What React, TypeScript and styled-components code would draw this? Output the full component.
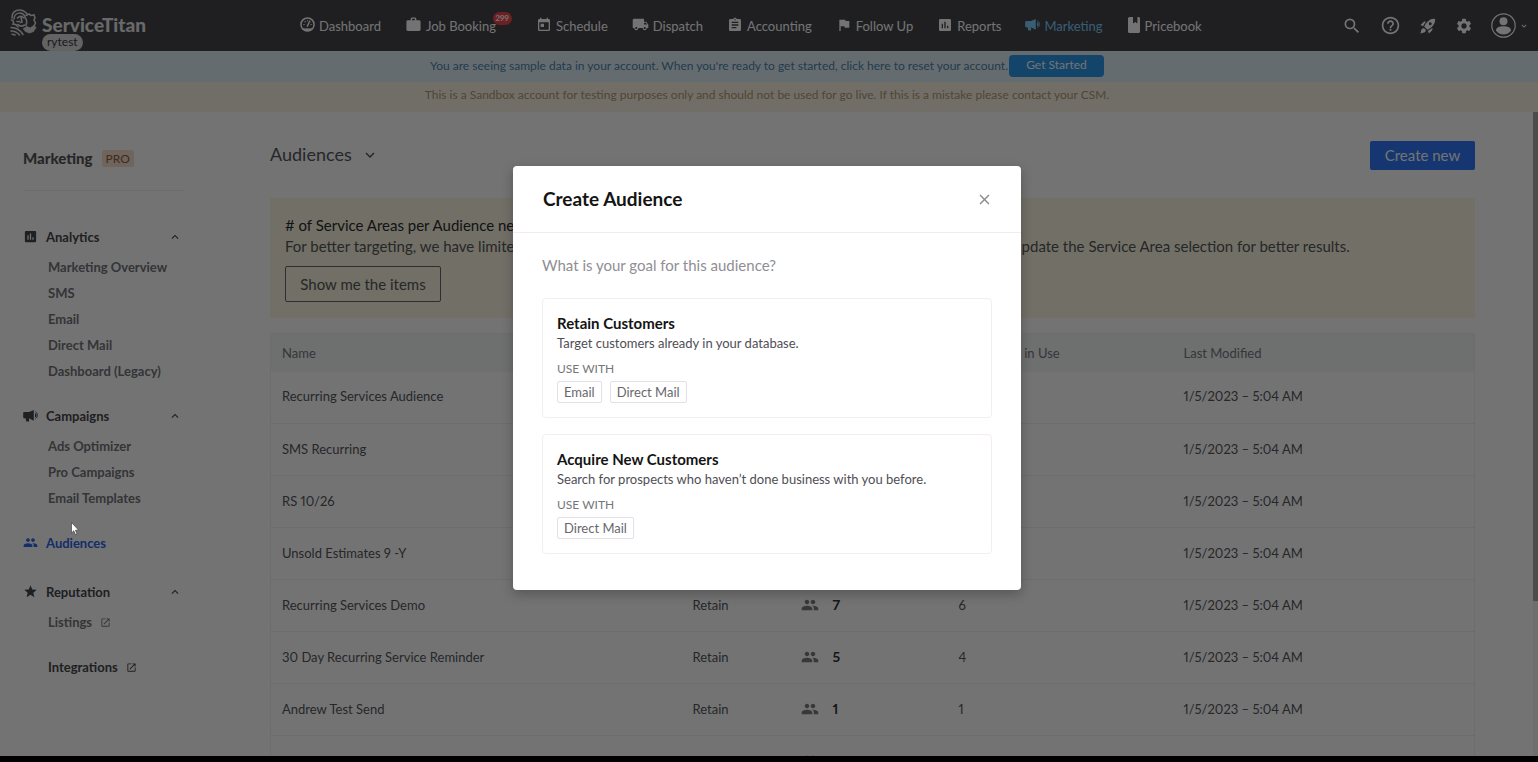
import React from "react";
import styled, { createGlobalStyle, css } from "styled-components";
import {
  MdWork,
  MdToday,
  MdLocalShipping,
  MdAssignment,
  MdFlag,
  MdAssessment,
  MdSearch,
  MdHelpOutline,
  MdSettings,
  MdPeople,
  MdStar,
  MdOpenInNew,
  MdExpandMore,
  MdExpandLess,
  MdClose,
  MdRocketLaunch,
} from "react-icons/md";

const Global = createGlobalStyle`
  *, *::before, *::after { box-sizing: border-box; }
  body {
    margin: 0;
    background: #000;
    color: #56575c;
    font-family: Lato, "Liberation Sans", sans-serif;
    font-size: 13px;
    font-variant-numeric: proportional-nums;
    overflow: hidden;
  }
  button { font-family: inherit; cursor: pointer; }
  a { color: inherit; text-decoration: none; }
  h1, h2, h3, p, ul { margin: 0; padding: 0; }
  ul { list-style: none; }
  svg { display: block; flex: none; }
`;

/* ---------- shell ---------- */

const Screen = styled.div`
  height: 100vh;
  display: flex;
  flex-direction: column;
  padding-bottom: 6px;
  background: #000;
`;

const Shell = styled.div`
  position: relative;
  flex: 1;
  min-height: 0;
  display: flex;
  flex-direction: column;
  background: #fff;
  overflow: hidden;
`;

const TopBar = styled.header`
  height: 51px;
  flex: none;
  display: flex;
  align-items: center;
  padding: 0 9px 0 10px;
  background: #45454a;
  color: #fff;
`;

const Brand = styled.a`
  position: relative;
  width: 290px;
  height: 51px;
  flex: none;
  display: flex;
  align-items: center;
  gap: 5px;
  padding-bottom: 2px;
  font-size: 19px;
  font-weight: 900;
  line-height: 24px;
  color: #e8e8ea;

  svg { margin-bottom: 4px; }
`;

const Tenant = styled.span`
  position: absolute;
  left: 32px;
  top: 34px;
  height: 17px;
  padding: 0 5px;
  border-radius: 9px;
  background: #dcdcde;
  color: #3a3a3e;
  font-size: 12px;
  font-weight: 400;
  line-height: 15px;
`;

const MainNav = styled.nav`
  display: flex;
  align-items: center;
  gap: 24px;
  flex: 1;
`;

const NavLink = styled.a<{ $active?: boolean; $badged?: boolean }>`
  position: relative;
  display: flex;
  align-items: center;
  gap: 4px;
  line-height: 20px;
  white-space: nowrap;
  color: ${(p) => (p.$active ? "#7fd0ff" : "#fff")};
  ${(p) =>
    p.$badged &&
    css`
      padding-right: 16px;
    `}

  svg { margin-bottom: 2px; }
`;

const Badge = styled.span`
  position: absolute;
  right: 0;
  top: -4px;
  height: 13px;
  padding: 0 3px;
  border-radius: 7px;
  background: #f0484f;
  font-size: 8px;
  font-weight: 700;
  line-height: 13px;
`;

const Tools = styled.div`
  display: flex;
  align-items: center;
  gap: 18px;
`;

const IconButton = styled.button`
  display: flex;
  align-items: center;
  gap: 3px;
  padding: 0;
  border: 0;
  background: none;
  color: inherit;
`;

const Banner = styled.div<{ $tone: "info" | "sandbox" }>`
  height: ${(p) => (p.$tone === "info" ? "31px" : "30px")};
  flex: none;
  display: flex;
  align-items: center;
  justify-content: center;
  gap: 1px;
  padding-right: 4px;
  padding-bottom: ${(p) => (p.$tone === "info" ? "2px" : "4px")};
  font-size: 12px;
  line-height: 20px;
  background: ${(p) => (p.$tone === "info" ? "#e0eff8" : "#faf4e4")};
  color: ${(p) => (p.$tone === "info" ? "#4f84a8" : "#b39a74")};
`;

const StartButton = styled.button`
  height: 22px;
  width: 95px;
  margin-top: 1px;
  padding: 0 0 2px;
  border: 0;
  border-radius: 4px;
  background: #2b98ea;
  color: #fff;
  font-size: 12px;
  line-height: 18px;
`;

const Workspace = styled.div`
  flex: 1;
  min-height: 0;
  display: flex;
  overflow: hidden;
`;

const ScrollTrack = styled.div`
  width: 5px;
  flex: none;
  background: #f4f4f4;
`;

const ScrollThumb = styled.div`
  height: 76%;
  background: #a9a9ad;
`;

/* ---------- sidebar ---------- */

const Sidebar = styled.aside`
  width: 270px;
  flex: none;
  padding: 33px 86px 0 23px;
`;

const SidebarTitle = styled.div`
  display: flex;
  align-items: center;
  gap: 9px;
  height: 46px;
  margin-bottom: 29px;
  padding-bottom: 19px;
  border-bottom: 1px solid #eeeef0;
`;

const ProductName = styled.h1`
  font-size: 15px;
  font-weight: 900;
  line-height: 28px;
  color: #55565b;
`;

const ProTag = styled.span`
  padding: 0 4px;
  border-radius: 2px;
  background: #f5dfcd;
  color: #8f6242;
  font-size: 12px;
  line-height: 17px;
`;

const Group = styled.section`
  margin-bottom: 15px;
`;

const GroupHead = styled.button<{ $active?: boolean }>`
  width: 100%;
  height: 34px;
  display: flex;
  align-items: center;
  gap: 8px;
  padding: 0 2px 1px 0;
  border: 0;
  background: none;
  color: ${(p) => (p.$active ? "#2c66e8" : "#46474c")};
  font-size: 13px;
  font-weight: 700;
  text-align: left;
`;

const GroupLabel = styled.span`
  flex: 1;
`;

const SubLink = styled.a<{ $strong?: boolean }>`
  height: ${(p) => (p.$strong ? "34px" : "26px")};
  display: flex;
  align-items: center;
  gap: 8px;
  padding-left: 25px;
  font-weight: 700;
  white-space: nowrap;
  color: ${(p) => (p.$strong ? "#46474c" : "#74757b")};
`;

/* ---------- main ---------- */

const Main = styled.main`
  flex: 1;
  min-width: 0;
  padding: 29px 58px 0 0;
`;

const PageHead = styled.div`
  display: flex;
  align-items: center;
  justify-content: space-between;
  margin-bottom: 28px;
`;

const ViewPicker = styled.button`
  display: flex;
  align-items: center;
  gap: 9px;
  padding: 0 0 2px;
  border: 0;
  background: none;
  color: #56575c;
  font-size: 18px;
  line-height: 27px;
`;

const CreateButton = styled.button`
  height: 29px;
  width: 105px;
  padding: 0 0 1px;
  border: 0;
  border-radius: 2px;
  background: #2f78fa;
  color: #fff;
  font-size: 15px;
  line-height: 27px;
`;

const Alert = styled.section`
  margin-bottom: 15px;
  padding: 17px 15px 16px;
  background: #faf6e2;
  color: #56575a;
  font-size: 15px;
  line-height: 21px;
  white-space: nowrap;
`;

const AlertTitle = styled.h2`
  font-size: 15px;
  font-weight: 400;
  line-height: 21px;
  color: #2c2c2e;
`;

const OutlineButton = styled.button`
  display: block;
  width: 156px;
  height: 36px;
  margin-top: 9px;
  padding: 0;
  border: 1px solid #66666a;
  border-radius: 2px;
  background: none;
  color: #56575a;
  font-size: 15px;
`;

const Table = styled.table`
  width: 100%;
  table-layout: fixed;
  border-collapse: collapse;
  border: 1px solid #f1f1f3;
`;

const Col = styled.col<{ $w?: number }>`
  ${(p) => p.$w && `width: ${p.$w}px;`}
`;

const Th = styled.th`
  height: 38px;
  padding: 0 11px;
  background: #f4f5f7;
  color: #787980;
  font-weight: 400;
  text-align: left;
`;

const Td = styled.td`
  height: 52px;
  padding: 0 11px 2px;
  border-bottom: 1px solid #efeff1;
  white-space: nowrap;
`;

const Count = styled.span`
  display: flex;
  align-items: center;
  gap: 14px;
  font-size: 14px;
  font-weight: 700;
  color: #333336;

  svg { color: #7d7d82; }
`;

/* ---------- dialog ---------- */

const Scrim = styled.div`
  position: absolute;
  inset: 0;
  display: flex;
  align-items: center;
  justify-content: center;
  padding-right: 4px;
  background: rgba(0, 0, 0, 0.55);
`;

const Dialog = styled.section`
  width: 508px;
  padding-bottom: 36px;
  border-radius: 4px;
  background: #fff;
  box-shadow: 0 4px 12px rgba(0, 0, 0, 0.25);
`;

const DialogHead = styled.header`
  height: 67px;
  display: flex;
  align-items: center;
  justify-content: space-between;
  padding: 0 28px 0 30px;
  border-bottom: 1px solid #f3ebf0;
`;

const DialogTitle = styled.h2`
  font-size: 19px;
  font-weight: 700;
  line-height: 24px;
  color: #141414;
`;

const CloseButton = styled(IconButton)`
  color: #8b8a90;
`;

const DialogBody = styled.div`
  display: flex;
  flex-direction: column;
  gap: 16px;
  padding: 22px 29px 0;
`;

const Question = styled.p`
  margin-bottom: 7px;
  font-size: 15px;
  line-height: 20px;
  color: #8f8e94;
`;

const Goal = styled.button`
  display: block;
  width: 100%;
  padding: 14px;
  border: 1px solid #f4edf3;
  border-radius: 4px;
  background: none;
  text-align: left;
  font-size: 13px;
  line-height: 20px;
  color: #4f4e54;
`;

const GoalTitle = styled.strong`
  display: block;
  font-size: 15px;
  font-weight: 700;
  line-height: 20px;
  color: #141414;
`;

const GoalText = styled.span`
  display: block;
`;

const UseWith = styled.span`
  display: block;
  margin: 6px 0 2px;
  font-size: 12px;
  line-height: 20px;
  color: #77767c;
`;

const Tags = styled.span`
  display: flex;
  gap: 8px;
`;

const Tag = styled.span`
  padding: 0 6px;
  border: 1px solid #e2dfe8;
  border-radius: 2px;
  color: #68676d;
  line-height: 20px;
`;

const Pointer = styled.svg`
  position: absolute;
  left: 71px;
  top: 522px;
`;

/* ---------- drawings ---------- */

const TitanLogo = () => (
  <svg width="27" height="27" viewBox="0 0 27 27" fill="none" stroke="#dededf" strokeWidth="1.6" strokeLinecap="round">
    <path d="M2 9C1.500 4 5 1 9.500 1c4 0 6 2 7.500 4" />
    <path d="M4 10c0-4 3-6 6-6 3 0 4 1.500 5 3.500" />
    <path d="M1.500 11c2 .500 2.500 2 1.500 4 2 0 4 1 5 3" />
    <path d="M7.500 9c2-2 4.500-2 6.500 0M7 12.500h2.500M8 15.500c2 2 4.500 2 6.500.500" />
    <path d="M11 8l1 5-1.500.500" />
    <path d="M16 6.500l3-1.500 2 1.500 3-.500 1 3-1 2 1.500 3-1.500 3" />
    <path d="M15 8.500c2 2 2 5 1 8" />
    <path d="M13.500 19.500l3.500-2 3 1.500 4-2.500 2 2-2.500 4-4 1.500-4-1.500z" fill="#dededf" strokeWidth=".8" />
    <path d="M1 18.500c5 0 9.500 3 12 7M1 22c4 0 6.500 1.500 8.500 4M2 25.300c1.200 0 2.200.2 3 .7" />
  </svg>
);

const GaugeIcon = () => (
  <svg width="15" height="15" viewBox="0 0 16 16" fill="none" stroke="currentColor">
    <circle cx="8" cy="8" r="7" strokeWidth="1.6" />
    <path d="M3.4 12.4h9.2c-1 1.4-2.800 2.200-4.600 2.200s-3.600-.8-4.600-2.200z" fill="currentColor" strokeWidth=".6" />
    <path d="M7.600 10.200 10.600 4" strokeWidth="1.600" />
    <path d="M3.600 8h1.300M5 4.700l.9.900M8 3.500v1M11.300 8h1.200" strokeWidth="1.300" />
  </svg>
);

const HornIcon = () => (
  <svg width="15" height="15" viewBox="0 0 16 16" fill="currentColor">
    <path d="M1.200 4.300H6.500L11.500 2v11.500L6.500 10.800V14.500H3.500L2.700 10.800H1.200A1 1 0 0 1 .2 9.800V5.300a1 1 0 0 1 1-1z" />
    <path d="M12.800 5.200c2.200 1 2.200 4 0 5" />
    <path d="M13.300 4c2.700 1.300 2.700 6 0 7.300" fill="none" stroke="currentColor" strokeWidth="1" />
  </svg>
);

const BookIcon = () => (
  <svg width="14" height="16" viewBox="0 0 14 16" fill="currentColor">
    <path d="M1 1.500A1.500 1.500 0 0 1 2.500 0H6v6.500l2.200-1.600 2.200 1.600V0h1.100A1.500 1.500 0 0 1 13 1.500v13a1.500 1.500 0 0 1-1.500 1.500h-9A1.500 1.500 0 0 1 1 14.500z" />
  </svg>
);

const Avatar = () => (
  <svg width="25" height="25" viewBox="0 0 25 25" fill="currentColor">
    <circle cx="12.500" cy="12.500" r="11.700" fill="none" stroke="currentColor" strokeWidth="1.200" />
    <circle cx="12.500" cy="8.300" r="4" />
    <path d="M5 17.500c0-3 3.500-4.300 7.500-4.300s7.500 1.300 7.500 4.300c-1.500 2.500-4.500 4-7.500 4s-6-1.500-7.500-4z" />
  </svg>
);

/* ---------- data ---------- */

const NAV = [
  { label: "Dashboard", icon: <GaugeIcon /> },
  { label: "Job Booking", icon: <MdWork size={17} />, badge: "299" },
  { label: "Schedule", icon: <MdToday size={16} /> },
  { label: "Dispatch", icon: <MdLocalShipping size={17} /> },
  { label: "Accounting", icon: <MdAssignment size={16} /> },
  { label: "Follow Up", icon: <MdFlag size={16} /> },
  { label: "Reports", icon: <MdAssessment size={16} /> },
  { label: "Marketing", icon: <HornIcon />, active: true },
  { label: "Pricebook", icon: <BookIcon /> },
];

const ROWS = [
  ["Recurring Services Audience", "12", "9"],
  ["SMS Recurring", "8", "7"],
  ["RS 10/26", "3", "2"],
  ["Unsold Estimates 9 -Y", "4", "3"],
  ["Recurring Services Demo", "7", "6"],
  ["30 Day Recurring Service Reminder", "5", "4"],
  ["Andrew Test Send", "1", "1"],
  ["Unsold Estimates 9 -Y", "7", "1"],
];

const GOALS = [
  {
    title: "Retain Customers",
    text: "Target customers already in your database.",
    tags: ["Email", "Direct Mail"],
  },
  {
    title: "Acquire New Customers",
    text: "Search for prospects who haven’t done business with you before.",
    tags: ["Direct Mail"],
  },
];

type MenuProps = {
  icon: React.ReactNode;
  label: string;
  active?: boolean;
  items?: { label: string; external?: boolean }[];
};

const MenuGroup = ({ icon, label, active, items }: MenuProps) => (
  <Group>
    <GroupHead type="button" $active={active}>
      {icon}
      <GroupLabel>{label}</GroupLabel>
      {items && <MdExpandLess size={14} />}
    </GroupHead>
    {items && (
      <ul>
        {items.map((it) => (
          <li key={it.label}>
            <SubLink href="#">
              {it.label}
              {it.external && <MdOpenInNew size={11} />}
            </SubLink>
          </li>
        ))}
      </ul>
    )}
  </Group>
);

export default function App() {
  return (
    <Screen>
      <Global />
      <Shell>
        <TopBar>
          <Brand href="#">
            <TitanLogo />
            ServiceTitan
            <Tenant>rytest</Tenant>
          </Brand>
          <MainNav>
            {NAV.map((n) => (
              <NavLink key={n.label} href="#" $active={n.active} $badged={!!n.badge}>
                {n.icon}
                {n.label}
                {n.badge && <Badge>{n.badge}</Badge>}
              </NavLink>
            ))}
          </MainNav>
          <Tools>
            <IconButton type="button" aria-label="Search"><MdSearch size={20} /></IconButton>
            <IconButton type="button" aria-label="Help"><MdHelpOutline size={21} /></IconButton>
            <IconButton type="button" aria-label="What's new"><MdRocketLaunch size={18} /></IconButton>
            <IconButton type="button" aria-label="Settings"><MdSettings size={18} /></IconButton>
            <IconButton type="button" aria-label="Account">
              <Avatar />
              <MdExpandMore size={10} />
            </IconButton>
          </Tools>
        </TopBar>

        <Banner $tone="info">
          You are seeing sample data in your account. When you're ready to get started, click here to reset your account.
          <StartButton type="button">Get Started</StartButton>
        </Banner>
        <Banner $tone="sandbox">
          This is a Sandbox account for testing purposes only and should not be used for go live. If this is a mistake please contact your CSM.
        </Banner>

        <Workspace>
          <Sidebar>
            <SidebarTitle>
              <ProductName>Marketing</ProductName>
              <ProTag>PRO</ProTag>
            </SidebarTitle>
            <MenuGroup
              icon={<MdAssessment size={15} />}
              label="Analytics"
              items={[
                { label: "Marketing Overview" },
                { label: "SMS" },
                { label: "Email" },
                { label: "Direct Mail" },
                { label: "Dashboard (Legacy)" },
              ]}
            />
            <MenuGroup
              icon={<HornIcon />}
              label="Campaigns"
              items={[{ label: "Ads Optimizer" }, { label: "Pro Campaigns" }, { label: "Email Templates" }]}
            />
            <MenuGroup icon={<MdPeople size={15} />} label="Audiences" active />
            <MenuGroup
              icon={<MdStar size={15} />}
              label="Reputation"
              items={[{ label: "Listings", external: true }]}
            />
            <SubLink href="#" $strong>
              Integrations
              <MdOpenInNew size={11} />
            </SubLink>
          </Sidebar>

          <Main>
            <PageHead>
              <ViewPicker type="button">
                Audiences
                <MdExpandMore size={18} />
              </ViewPicker>
              <CreateButton type="button">Create new</CreateButton>
            </PageHead>

            <Alert>
              <AlertTitle># of Service Areas per Audience needs to be updated</AlertTitle>
              <p>
                For better targeting, we have limited the number of Service Areas that are allowed per Audience. Please go and update the Service Area selection for better results.
              </p>
              <OutlineButton type="button">Show me the items</OutlineButton>
            </Alert>

            <Table>
              <colgroup>
                <Col />
                <Col $w={108} />
                <Col $w={158} />
                <Col $w={225} />
                <Col $w={302} />
              </colgroup>
              <thead>
                <tr>
                  <Th>Name</Th>
                  <Th>Type</Th>
                  <Th>Customers</Th>
                  <Th>Campaigns in Use</Th>
                  <Th>Last Modified</Th>
                </tr>
              </thead>
              <tbody>
                {ROWS.map(([name, count, used], i) => (
                  <tr key={i}>
                    <Td>{name}</Td>
                    <Td>Retain</Td>
                    <Td>
                      <Count>
                        <MdPeople size={18} />
                        {count}
                      </Count>
                    </Td>
                    <Td>{used}</Td>
                    <Td>1/5/2023 – 5:04 AM</Td>
                  </tr>
                ))}
              </tbody>
            </Table>
          </Main>
          <ScrollTrack>
            <ScrollThumb />
          </ScrollTrack>
        </Workspace>

        <Scrim>
          <Dialog role="dialog" aria-modal="true" aria-labelledby="dialog-title">
            <DialogHead>
              <DialogTitle id="dialog-title">Create Audience</DialogTitle>
              <CloseButton type="button" aria-label="Close">
                <MdClose size={17} />
              </CloseButton>
            </DialogHead>
            <DialogBody>
              <Question>What is your goal for this audience?</Question>
              {GOALS.map((g) => (
                <Goal key={g.title} type="button">
                  <GoalTitle>{g.title}</GoalTitle>
                  <GoalText>{g.text}</GoalText>
                  <UseWith>USE WITH</UseWith>
                  <Tags>
                    {g.tags.map((t) => (
                      <Tag key={t}>{t}</Tag>
                    ))}
                  </Tags>
                </Goal>
              ))}
            </DialogBody>
          </Dialog>
        </Scrim>

        <Pointer width="9" height="14" viewBox="0 0 9 14" aria-hidden="true">
          <path d="M.5.500v10.500l2.300-2.200 1.600 3.700 1.600-.7-1.600-3.600h3.300z" fill="#fff" stroke="#333" strokeWidth=".6" />
        </Pointer>
      </Shell>
    </Screen>
  );
}
